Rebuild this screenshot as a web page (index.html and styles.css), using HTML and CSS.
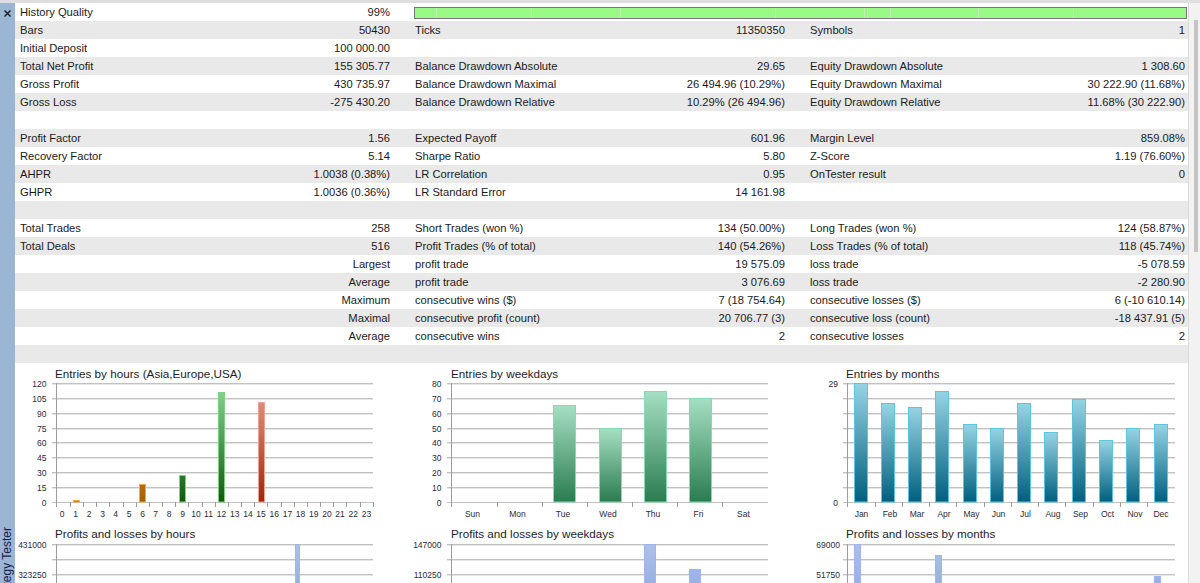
FILE: index.html
```html
<!DOCTYPE html>
<html lang="en">
  <head>
    <meta charset="UTF-8" />
    <title>Strategy Tester - Backtest</title>
    <link rel="stylesheet" href="styles.css">
  </head>
  <body>
    <div class="window">
      <!-- left dock strip -->
      <div class="sidebar">
        <svg class="close" width="7" height="7" viewBox="0 0 7 7">
          <path d="M0.5 0.5L6.5 6.5M6.5 0.5L0.5 6.5" stroke="#1a1a1a" stroke-width="1.4" fill="none"/>
        </svg>
        <div class="side-title">Strategy Tester</div>
      </div>

      <div class="main">
        <!-- Backtest report table -->
        <div class="stats">
          <div class="row">
            <div class="cell"><span>History Quality</span><span>99%</span></div>
            <div class="quality">
              <div class="qbar">
                <span style="width:21px"></span>
                <span style="width:95px"></span>
                <span style="width:89px"></span>
                <span style="width:155px"></span>
                <span style="width:89px"></span>
                <span style="width:3px"></span>
                <span style="width:23px"></span>
                <span style="width:88px"></span>
                <span style="width:95px"></span>
                <span></span>
              </div>
            </div>
          </div>
          <div class="row">
            <div class="cell"><span>Bars</span><span>50430</span></div>
            <div class="cell"><span>Ticks</span><span>11350350</span></div>
            <div class="cell"><span>Symbols</span><span>1</span></div>
          </div>
          <div class="row">
            <div class="cell"><span>Initial Deposit</span><span>100 000.00</span></div>
            <div class="cell"></div>
            <div class="cell"></div>
          </div>
          <div class="row">
            <div class="cell"><span>Total Net Profit</span><span>155 305.77</span></div>
            <div class="cell"><span>Balance Drawdown Absolute</span><span>29.65</span></div>
            <div class="cell"><span>Equity Drawdown Absolute</span><span>1 308.60</span></div>
          </div>
          <div class="row">
            <div class="cell"><span>Gross Profit</span><span>430 735.97</span></div>
            <div class="cell"><span>Balance Drawdown Maximal</span><span>26 494.96 (10.29%)</span></div>
            <div class="cell"><span>Equity Drawdown Maximal</span><span>30 222.90 (11.68%)</span></div>
          </div>
          <div class="row">
            <div class="cell"><span>Gross Loss</span><span>-275 430.20</span></div>
            <div class="cell"><span>Balance Drawdown Relative</span><span>10.29% (26 494.96)</span></div>
            <div class="cell"><span>Equity Drawdown Relative</span><span>11.68% (30 222.90)</span></div>
          </div>
          <div class="row"></div>
          <div class="row">
            <div class="cell"><span>Profit Factor</span><span>1.56</span></div>
            <div class="cell"><span>Expected Payoff</span><span>601.96</span></div>
            <div class="cell"><span>Margin Level</span><span>859.08%</span></div>
          </div>
          <div class="row">
            <div class="cell"><span>Recovery Factor</span><span>5.14</span></div>
            <div class="cell"><span>Sharpe Ratio</span><span>5.80</span></div>
            <div class="cell"><span>Z-Score</span><span>1.19 (76.60%)</span></div>
          </div>
          <div class="row">
            <div class="cell"><span>AHPR</span><span>1.0038 (0.38%)</span></div>
            <div class="cell"><span>LR Correlation</span><span>0.95</span></div>
            <div class="cell"><span>OnTester result</span><span>0</span></div>
          </div>
          <div class="row">
            <div class="cell"><span>GHPR</span><span>1.0036 (0.36%)</span></div>
            <div class="cell"><span>LR Standard Error</span><span>14 161.98</span></div>
            <div class="cell"></div>
          </div>
          <div class="row"></div>
          <div class="row">
            <div class="cell"><span>Total Trades</span><span>258</span></div>
            <div class="cell"><span>Short Trades (won %)</span><span>134 (50.00%)</span></div>
            <div class="cell"><span>Long Trades (won %)</span><span>124 (58.87%)</span></div>
          </div>
          <div class="row">
            <div class="cell"><span>Total Deals</span><span>516</span></div>
            <div class="cell"><span>Profit Trades (% of total)</span><span>140 (54.26%)</span></div>
            <div class="cell"><span>Loss Trades (% of total)</span><span>118 (45.74%)</span></div>
          </div>
          <div class="row">
            <div class="cell"><span></span><span>Largest</span></div>
            <div class="cell"><span>profit trade</span><span>19 575.09</span></div>
            <div class="cell"><span>loss trade</span><span>-5 078.59</span></div>
          </div>
          <div class="row">
            <div class="cell"><span></span><span>Average</span></div>
            <div class="cell"><span>profit trade</span><span>3 076.69</span></div>
            <div class="cell"><span>loss trade</span><span>-2 280.90</span></div>
          </div>
          <div class="row">
            <div class="cell"><span></span><span>Maximum</span></div>
            <div class="cell"><span>consecutive wins ($)</span><span>7 (18 754.64)</span></div>
            <div class="cell"><span>consecutive losses ($)</span><span>6 (-10 610.14)</span></div>
          </div>
          <div class="row">
            <div class="cell"><span></span><span>Maximal</span></div>
            <div class="cell"><span>consecutive profit (count)</span><span>20 706.77 (3)</span></div>
            <div class="cell"><span>consecutive loss (count)</span><span>-18 437.91 (5)</span></div>
          </div>
          <div class="row">
            <div class="cell"><span></span><span>Average</span></div>
            <div class="cell"><span>consecutive wins</span><span>2</span></div>
            <div class="cell"><span>consecutive losses</span><span>2</span></div>
          </div>
          <div class="row"></div>
        </div>

        <!-- Charts -->
        <div class="charts">
          <!-- Entries by hours -->
          <svg class="chart" width="395" height="161">
            <defs>
              <linearGradient id="gOrange" gradientUnits="userSpaceOnUse" x1="0" y1="20" x2="0" y2="139">
                <stop offset="0" stop-color="#f7c468"/><stop offset="1" stop-color="#a85e00"/>
              </linearGradient>
              <linearGradient id="gGreen" gradientUnits="userSpaceOnUse" x1="0" y1="20" x2="0" y2="139">
                <stop offset="0" stop-color="#92d892"/><stop offset="1" stop-color="#0a5c0a"/>
              </linearGradient>
              <linearGradient id="gRed" gradientUnits="userSpaceOnUse" x1="0" y1="20" x2="0" y2="139">
                <stop offset="0" stop-color="#ee9f8e"/><stop offset="1" stop-color="#a0260a"/>
              </linearGradient>
            </defs>
            <text class="ttl" x="40" y="15">Entries by hours (Asia,Europe,USA)</text>
            <path class="grid" d="M37 20.5H358M37 35.5H358M37 50.5H358M37 65.5H358M37 79.5H358M37 94.5H358M37 109.5H358M37 124.5H358M37 139.5H358"/>
            <path class="grid-lo" d="M37 21.5H358M37 36.5H358M37 51.5H358M37 66.5H358M37 80.5H358M37 95.5H358M37 110.5H358M37 125.5H358"/>
            <path class="axis" d="M41.5 20V144M55.5 139V144M68.5 139V144M81.5 139V144M94.5 139V144M108.5 139V144M121.5 139V144M134.5 139V144M147.5 139V144M160.5 139V144M173.5 139V144M187.5 139V144M200.5 139V144M213.5 139V144M226.5 139V144M239.5 139V144M252.5 139V144M266.5 139V144M279.5 139V144M292.5 139V144M305.5 139V144M318.5 139V144M331.5 139V144M345.5 139V144M358.5 139V144"/>
            <g class="yl">
              <text x="31.5" y="23.5">120</text>
              <text x="31.5" y="38.5">105</text>
              <text x="31.5" y="53.5">90</text>
              <text x="31.5" y="68.5">75</text>
              <text x="31.5" y="82.5">60</text>
              <text x="31.5" y="97.5">45</text>
              <text x="31.5" y="112.5">30</text>
              <text x="31.5" y="127.5">15</text>
              <text x="31.5" y="142.5">0</text>
            </g>
            <g class="xl">
              <text x="47" y="154">0</text>
              <text x="60.5" y="154">1</text>
              <text x="74" y="154">2</text>
              <text x="87.5" y="154">3</text>
              <text x="100.5" y="154">4</text>
              <text x="114" y="154">5</text>
              <text x="127.5" y="154">6</text>
              <text x="140.5" y="154">7</text>
              <text x="154" y="154">8</text>
              <text x="167.5" y="154">9</text>
              <text x="181" y="154">10</text>
              <text x="193.5" y="154">11</text>
              <text x="206.6" y="154">12</text>
              <text x="219.8" y="154">13</text>
              <text x="232.9" y="154">14</text>
              <text x="246.1" y="154">15</text>
              <text x="259.3" y="154">16</text>
              <text x="272.4" y="154">17</text>
              <text x="285.6" y="154">18</text>
              <text x="298.8" y="154">19</text>
              <text x="311.9" y="154">20</text>
              <text x="325.1" y="154">21</text>
              <text x="338.3" y="154">22</text>
              <text x="351.4" y="154">23</text>
            </g>
            <rect class="bar-or" x="58.5" y="137.5" width="6" height="1.5"/>
            <rect class="bar-or" x="124.5" y="121.5" width="6" height="17.5"/>
            <rect class="bar-gr" x="164.5" y="112.5" width="6" height="26.5"/>
            <rect class="bar-gr" x="203.5" y="29.5" width="6" height="109.5"/>
            <rect class="bar-rd" x="243.5" y="39.5" width="6" height="99.5"/>
          </svg>

          <!-- Entries by weekdays -->
          <svg class="chart" width="395" height="161">
            <defs>
              <linearGradient id="gMint" x1="0" y1="0" x2="0" y2="1">
                <stop offset="0" stop-color="#a6dfc3"/><stop offset="1" stop-color="#2a7c4f"/>
              </linearGradient>
            </defs>
            <text class="ttl" x="41" y="15">Entries by weekdays</text>
            <path class="grid" d="M37 20.5H358M37 35.5H358M37 50.5H358M37 65.5H358M37 79.5H358M37 94.5H358M37 109.5H358M37 124.5H358M37 139.5H358"/>
            <path class="grid-lo" d="M37 21.5H358M37 36.5H358M37 51.5H358M37 66.5H358M37 80.5H358M37 95.5H358M37 110.5H358M37 125.5H358"/>
            <path class="axis" d="M41.5 20V144M87.5 139V144M132.5 139V144M177.5 139V144M222.5 139V144M267.5 139V144M312.5 139V144"/>
            <g class="yl">
              <text x="31.5" y="23.5">80</text>
              <text x="31.5" y="38.5">70</text>
              <text x="31.5" y="53.5">60</text>
              <text x="31.5" y="68.5">50</text>
              <text x="31.5" y="82.5">40</text>
              <text x="31.5" y="97.5">30</text>
              <text x="31.5" y="112.5">20</text>
              <text x="31.5" y="127.5">10</text>
              <text x="31.5" y="142.5">0</text>
            </g>
            <g class="xl">
              <text x="62.5" y="154">Sun</text>
              <text x="107.5" y="154">Mon</text>
              <text x="153" y="154">Tue</text>
              <text x="198" y="154">Wed</text>
              <text x="243" y="154">Thu</text>
              <text x="288.5" y="154">Fri</text>
              <text x="333.5" y="154">Sat</text>
            </g>
            <rect class="bar-mint" x="143.5" y="42.5" width="22" height="96.5"/>
            <rect class="bar-mint" x="189.5" y="65.5" width="22" height="73.5"/>
            <rect class="bar-mint" x="234.5" y="28.5" width="22" height="110.5"/>
            <rect class="bar-mint" x="279.5" y="35.5" width="22" height="103.5"/>
          </svg>

          <!-- Entries by months -->
          <svg class="chart" width="383" height="161">
            <defs>
              <linearGradient id="gTeal" x1="0" y1="0" x2="0" y2="1">
                <stop offset="0" stop-color="#96d4e4"/><stop offset="1" stop-color="#005f7e"/>
              </linearGradient>
            </defs>
            <text class="ttl" x="41" y="15">Entries by months</text>
            <path class="grid" d="M38 20.5H370M38 35.5H370M38 50.5H370M38 65.5H370M38 79.5H370M38 94.5H370M38 109.5H370M38 124.5H370M38 139.5H370"/>
            <path class="grid-lo" d="M38 21.5H370M38 36.5H370M38 51.5H370M38 66.5H370M38 80.5H370M38 95.5H370M38 110.5H370M38 125.5H370"/>
            <path class="axis" d="M42.5 20V144M70.5 139V144M97.5 139V144M124.5 139V144M151.5 139V144M179.5 139V144M206.5 139V144M233.5 139V144M260.5 139V144M288.5 139V144M315.5 139V144M342.5 139V144"/>
            <g class="yl">
              <text x="33" y="23.5">29</text>
              <text x="33" y="142.5">0</text>
            </g>
            <g class="xl">
              <text x="56.5" y="154">Jan</text>
              <text x="85" y="154">Feb</text>
              <text x="112" y="154">Mar</text>
              <text x="139" y="154">Apr</text>
              <text x="166.5" y="154">May</text>
              <text x="193.5" y="154">Jun</text>
              <text x="220.5" y="154">Jul</text>
              <text x="248" y="154">Aug</text>
              <text x="275.5" y="154">Sep</text>
              <text x="302.5" y="154">Oct</text>
              <text x="330" y="154">Nov</text>
              <text x="356" y="154">Dec</text>
            </g>
            <rect class="bar-teal" x="49.5" y="20.5" width="13" height="118.5"/>
            <rect class="bar-teal" x="76.5" y="40.5" width="13" height="98.5"/>
            <rect class="bar-teal" x="103.5" y="44.5" width="13" height="94.5"/>
            <rect class="bar-teal" x="130.5" y="28.5" width="13" height="110.5"/>
            <rect class="bar-teal" x="158.5" y="61.5" width="13" height="77.5"/>
            <rect class="bar-teal" x="185.5" y="65.5" width="13" height="73.5"/>
            <rect class="bar-teal" x="212.5" y="40.5" width="13" height="98.5"/>
            <rect class="bar-teal" x="239.5" y="69.5" width="13" height="69.5"/>
            <rect class="bar-teal" x="267.5" y="36.5" width="13" height="102.5"/>
            <rect class="bar-teal" x="294.5" y="77.5" width="13" height="61.5"/>
            <rect class="bar-teal" x="321.5" y="65.5" width="13" height="73.5"/>
            <rect class="bar-teal" x="349.5" y="61.5" width="13" height="77.5"/>
          </svg>

          <!-- Profits and losses by hours (only the top of it is in view) -->
          <svg class="chart" width="395" height="59">
            <defs>
              <linearGradient id="gBlue" gradientUnits="userSpaceOnUse" x1="0" y1="20" x2="0" y2="139">
                <stop offset="0" stop-color="#aec1ea"/><stop offset="1" stop-color="#6d8ed2"/>
              </linearGradient>
            </defs>
            <text class="ttl" x="40" y="14">Profits and losses by hours</text>
            <path class="grid" d="M37 20.5H358M37 35.5H358M37 50.5H358"/>
            <path class="grid-lo" d="M37 21.5H358M37 36.5H358M37 51.5H358"/>
            <path class="axis" d="M41.5 20V59"/>
            <g class="yl">
              <text x="31.5" y="23.5">431000</text>
              <text x="31.5" y="53.5">323250</text>
            </g>
            <rect class="bar-blue" x="280.5" y="20.5" width="4" height="118.5"/>
          </svg>

          <!-- Profits and losses by weekdays -->
          <svg class="chart" width="395" height="59">
            <text class="ttl" x="41" y="14">Profits and losses by weekdays</text>
            <path class="grid" d="M37 20.5H358M37 35.5H358M37 50.5H358"/>
            <path class="grid-lo" d="M37 21.5H358M37 36.5H358M37 51.5H358"/>
            <path class="axis" d="M41.5 20V59"/>
            <g class="yl">
              <text x="31.5" y="23.5">147000</text>
              <text x="31.5" y="53.5">110250</text>
            </g>
            <rect class="bar-blue" x="234.5" y="20.5" width="11" height="118.5"/>
            <rect class="bar-blue" x="279.5" y="45.5" width="11" height="93.5"/>
          </svg>

          <!-- Profits and losses by months -->
          <svg class="chart" width="383" height="59">
            <text class="ttl" x="41" y="14">Profits and losses by months</text>
            <path class="grid" d="M38 20.5H370M38 35.5H370M38 50.5H370"/>
            <path class="grid-lo" d="M38 21.5H370M38 36.5H370M38 51.5H370"/>
            <path class="axis" d="M42.5 20V59"/>
            <g class="yl">
              <text x="35" y="23.5">69000</text>
              <text x="35" y="53.5">51750</text>
            </g>
            <rect class="bar-blue" x="49.5" y="20.5" width="6" height="118.5"/>
            <rect class="bar-blue" x="130.5" y="31.5" width="6" height="107.5"/>
            <rect class="bar-blue" x="349.5" y="52.5" width="6" height="86.5"/>
          </svg>
        </div>
      </div>

      <!-- thin scrollbar -->
      <div class="vscroll"><div class="thumb"></div></div>
    </div>
  </body>
</html>
```

FILE: styles.css
```css
/* Reset */
* {
  margin: 0;
  padding: 0;
  box-sizing: border-box;
}
body {
  width: 1200px;
  height: 583px;
  overflow: hidden;
  background: #fff;
  font-family: "Liberation Sans", Arial, sans-serif;
  font-size: 11.2px;
  color: #1a1a1a;
}
.window {
  display: flex;
  height: 583px;
  border-top: 3px solid #dedede;
}

/* left dock strip */
.sidebar {
  width: 15px;
  flex: none;
  background: #9bb5d5;
  display: flex;
  flex-direction: column;
  align-items: center;
  overflow: hidden;
}
.close {
  display: block;
  margin-top: 7px;
}
.side-title {
  margin-top: auto;
  margin-bottom: -24px;
  writing-mode: vertical-rl;
  transform: rotate(180deg);
  font-size: 12px;
  line-height: 15px;
  color: #17204a;
  white-space: nowrap;
}

.main {
  flex: 1;
  min-width: 0;
  overflow: hidden;
}

/* report table */
.row {
  display: grid;
  grid-template-columns: 395px 395px 1fr;
  height: 18px;
  line-height: 18px;
}
.row:nth-child(even) {
  background: #e9e9e9;
}
.cell {
  display: flex;
  justify-content: space-between;
  padding: 0 20px 0 5px;
  white-space: nowrap;
}
.cell:nth-child(3) {
  padding-right: 3px;
}
.quality {
  grid-column: span 2;
  padding: 4px 1px 2px 4px;
}
.qbar {
  display: flex;
  height: 12px;
  border: 1px solid #787878;
  background: #99fa86;
}
.qbar span {
  flex: none;
  border-left: 1px solid #c2efb6;
}
.qbar span:first-child {
  border-left: 0;
}
.qbar span:last-child {
  flex: 1;
}

/* charts */
.charts {
  display: grid;
  grid-template-columns: 395px 395px 1fr;
  grid-template-rows: 161px 59px;
}
.chart {
  display: block;
}
.chart text {
  font-family: "Liberation Sans", Arial, sans-serif;
  font-size: 8.5px;
  fill: #2a2a3a;
}
.chart .ttl {
  font-size: 11.7px;
  fill: #1c1c2c;
}
.yl text {
  text-anchor: end;
}
.xl text {
  text-anchor: middle;
}
.grid {
  stroke: #c2c2c2;
  fill: none;
}
.grid-lo {
  stroke: #e6e6e6;
  fill: none;
}
.axis {
  stroke: #9c9c9c;
  fill: none;
}
.bar-or {
  fill: url(#gOrange);
  stroke: #f3a93a;
}
.bar-gr {
  fill: url(#gGreen);
  stroke: #80d080;
}
.bar-rd {
  fill: url(#gRed);
  stroke: #eea392;
}
.bar-mint {
  fill: url(#gMint);
  stroke: #86dbb0;
}
.bar-teal {
  fill: url(#gTeal);
  stroke: #5cc6e2;
}
.bar-blue {
  fill: url(#gBlue);
  stroke: #9db6ef;
}

/* scrollbar */
.vscroll {
  width: 12px;
  flex: none;
  background: #f2f2f2;
  border-left: 1px solid #dadada;
  padding-top: 17px;
}
.thumb {
  width: 4px;
  height: 232px;
  margin-left: 5px;
  background: #c4c4c4;
}
```
